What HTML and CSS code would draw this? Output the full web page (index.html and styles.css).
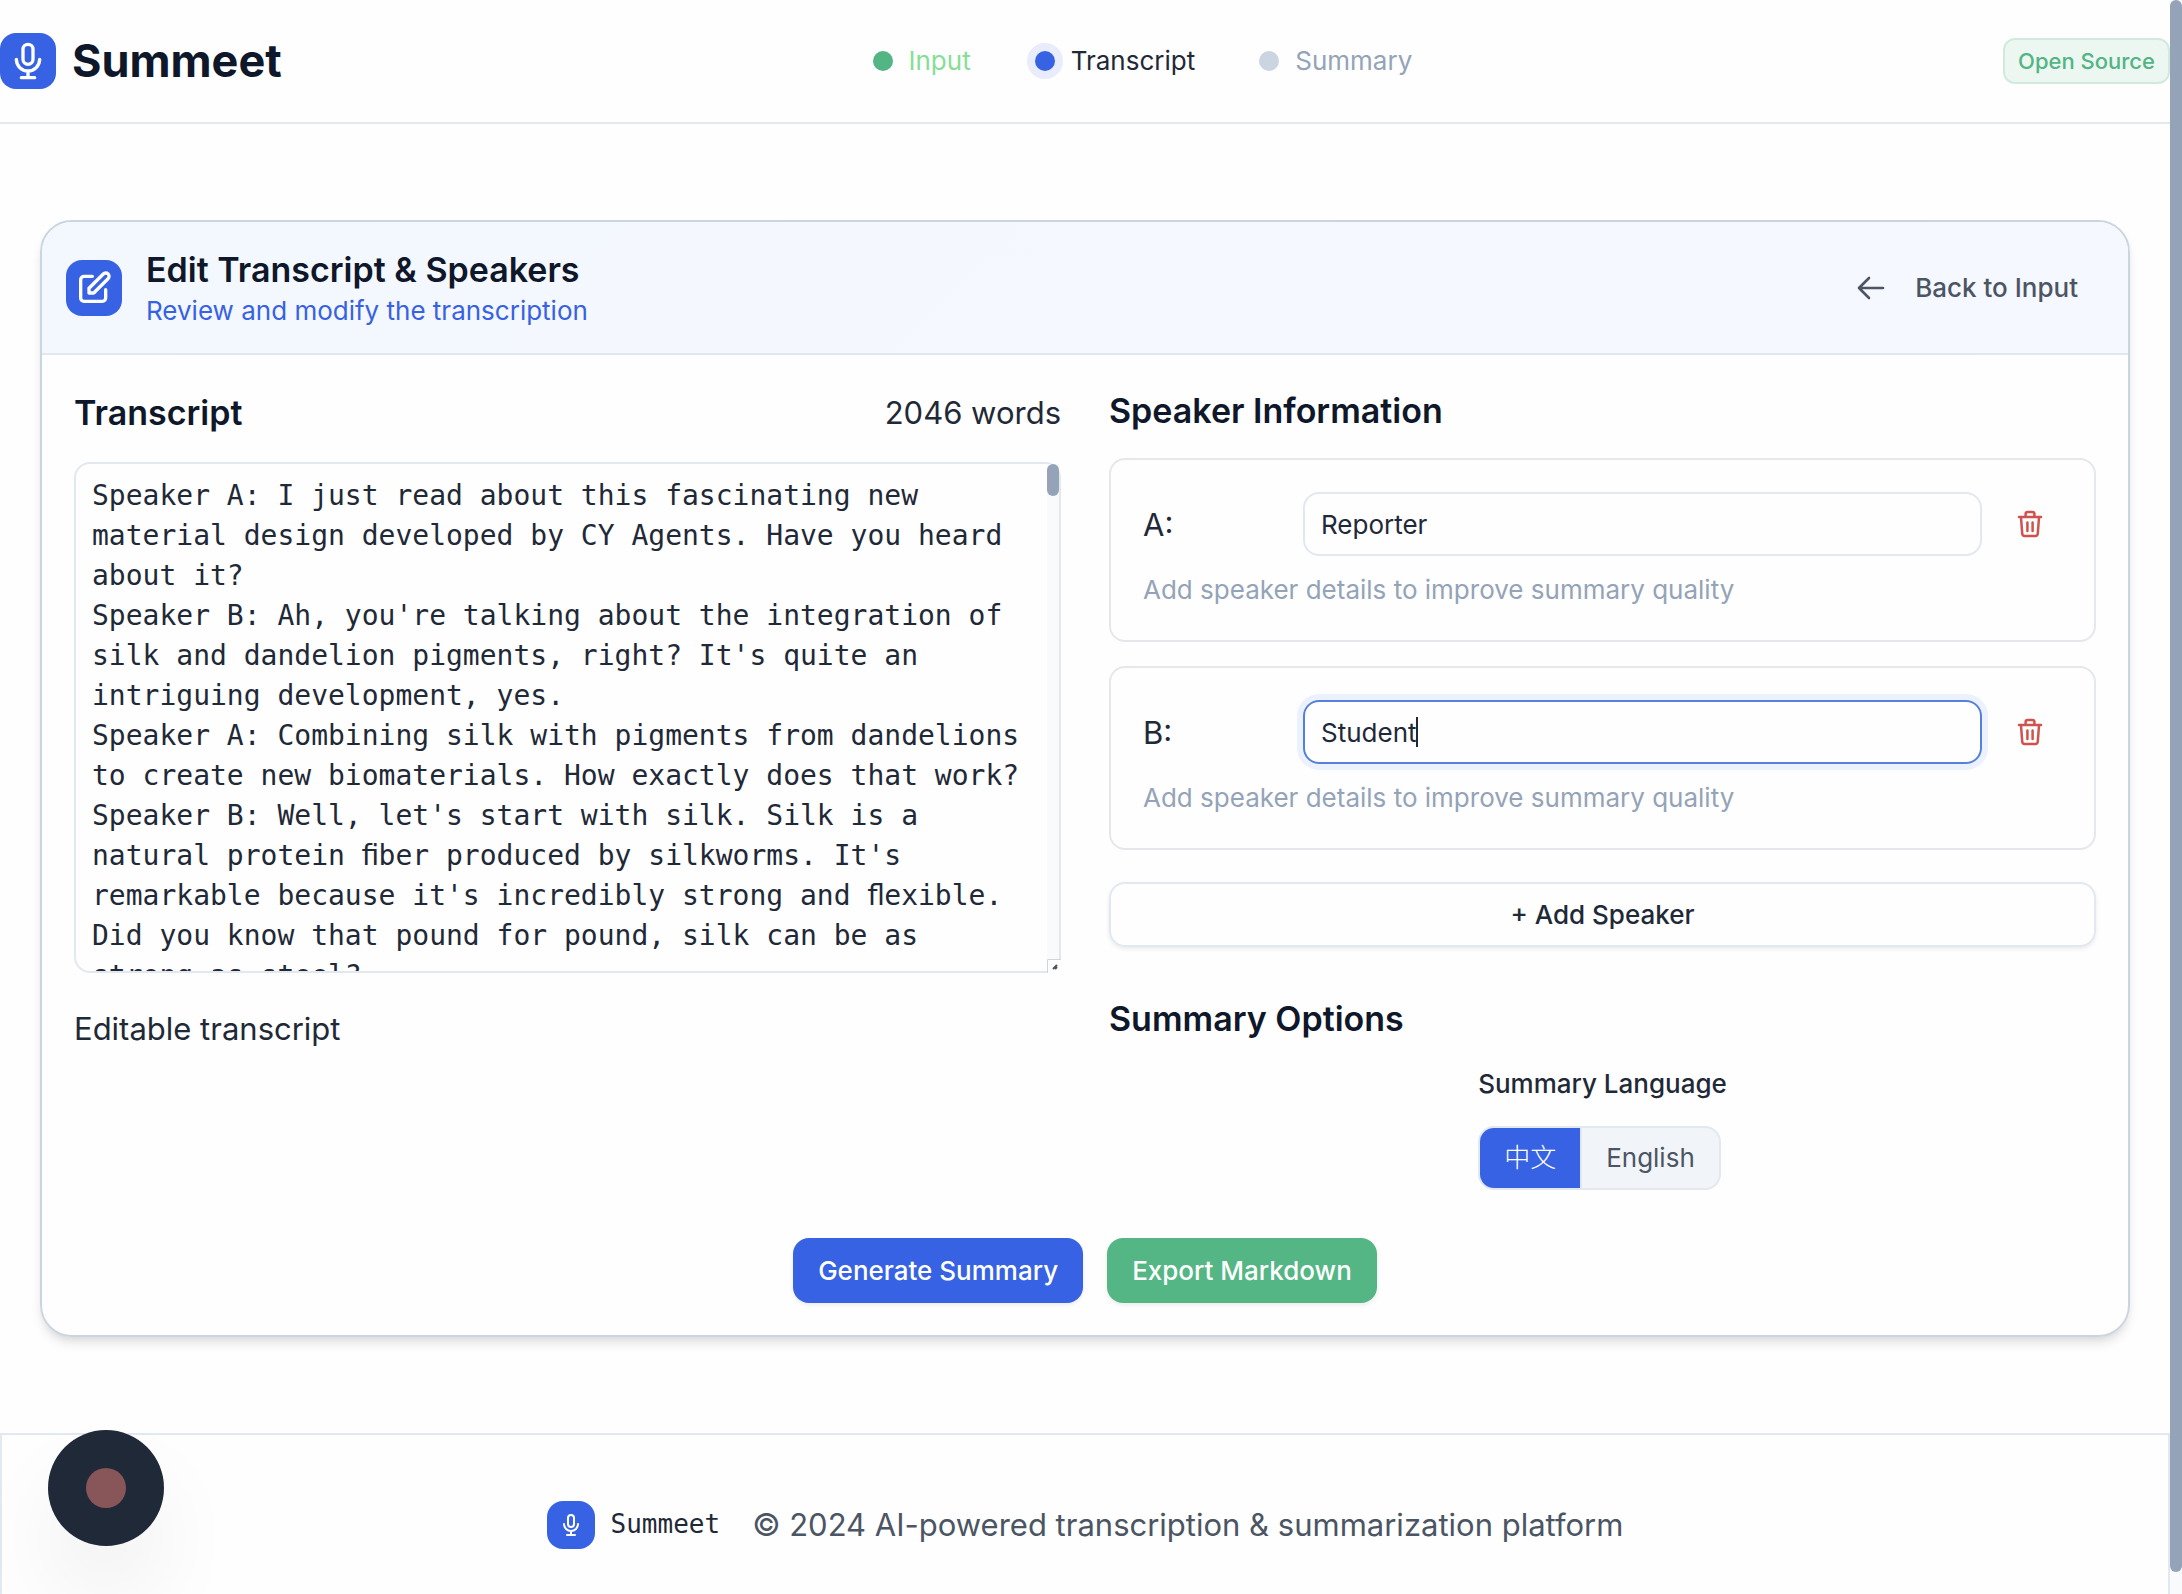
FILE: index.html
```html
<!DOCTYPE html>
<html lang="en">
<head>
<meta charset="utf-8">
<meta name="viewport" content="width=device-width, initial-scale=1">
<title>Summeet</title>
<link rel="stylesheet" href="styles.css">
</head>
<body>
<svg class="sprite" aria-hidden="true">
  <symbol id="mic" viewBox="0 0 24 24">
    <path d="M19 11a7 7 0 0 1-14 0M12 18v4M8 22h8M12 14a3 3 0 0 1-3-3V5a3 3 0 1 1 6 0v6a3 3 0 0 1-3 3z"/>
  </symbol>
  <symbol id="edit" viewBox="0 0 24 24">
    <path d="M11 5H6a2 2 0 0 0-2 2v11a2 2 0 0 0 2 2h11a2 2 0 0 0 2-2v-5m-1.414-9.414a2 2 0 1 1 2.828 2.828L11.828 15H9v-2.828l8.586-8.586z"/>
  </symbol>
  <symbol id="arrow" viewBox="0 0 24 24">
    <path d="M10.500 19.500 3 12l7.500-7.500M3 12h18"/>
  </symbol>
  <symbol id="trash" viewBox="0 0 28 28">
    <path d="M3 7h22M9.600 7V4a2 2 0 0 1 2-2h4.800a2 2 0 0 1 2 2v3M5 7.500l1.200 16a2.600 2.600 0 0 0 2.600 2.500h10.400a2.600 2.600 0 0 0 2.600-2.500l1.200-16M11.400 12.500v8.500M16.600 12.500v8.500"/>
  </symbol>
</svg>

<div class="viewport">
  <div class="page">
    <header class="topbar">
      <div class="brand">
        <span class="tile"><svg class="icon icon-lg"><use href="#mic"/></svg></span>
        <span class="brand-name">Summeet</span>
      </div>
      <ol class="steps">
        <li class="step step-done"><span class="dot"></span>Input</li>
        <li class="step step-current"><span class="dot"></span>Transcript</li>
        <li class="step step-next"><span class="dot"></span>Summary</li>
      </ol>
      <span class="badge">Open Source</span>
    </header>

    <main class="main">
      <section class="card">
        <div class="card-head">
          <span class="tile"><svg class="icon icon-lg"><use href="#edit"/></svg></span>
          <div class="card-titles">
            <h1 class="title">Edit Transcript &amp; Speakers</h1>
            <p class="subtitle">Review and modify the transcription</p>
          </div>
          <button class="back" type="button"><svg class="icon icon-md"><use href="#arrow"/></svg>Back to Input</button>
        </div>

        <div class="card-body">
          <div class="columns">
            <section class="column">
              <div class="transcript-head">
                <h2 class="title"><label for="transcript">Transcript</label></h2>
                <span>2046 words</span>
              </div>
              <div class="transcript-box">
                <textarea id="transcript" class="transcript" spellcheck="false">Speaker A: I just read about this fascinating new material design developed by CY Agents. Have you heard about it?
Speaker B: Ah, you're talking about the integration of silk and dandelion pigments, right? It's quite an intriguing development, yes.
Speaker A: Combining silk with pigments from dandelions to create new biomaterials. How exactly does that work?
Speaker B: Well, let's start with silk. Silk is a natural protein ﬁber produced by silkworms. It's remarkable because it's incredibly strong and ﬂexible. Did you know that pound for pound, silk can be as strong as steel?</textarea>
                <div class="scroll scroll-inner"><div class="thumb thumb-short"></div></div>
                <svg class="grip" viewBox="0 0 14 14"><path class="grip-box" d="M0 0h14v14H0z"/><path class="grip-edge" d="M.5 14V.5H14"/><path class="grip-mark" d="M6 10l4-4M8 10l2-2"/></svg>
              </div>
              <p class="note">Editable transcript</p>
            </section>

            <section class="column">
              <h2 class="title">Speaker Information</h2>
              <div class="speakers">
                <div class="speaker">
                  <div class="speaker-row">
                    <label class="speaker-label" for="speaker-a">A:</label>
                    <div class="field"><input class="input" id="speaker-a" type="text" value="Reporter"></div>
                    <button class="remove" type="button" aria-label="Remove speaker A"><svg class="icon icon-sm"><use href="#trash"/></svg></button>
                  </div>
                  <p class="hint">Add speaker details to improve summary quality</p>
                </div>
                <div class="speaker">
                  <div class="speaker-row">
                    <label class="speaker-label" for="speaker-b">B:</label>
                    <div class="field"><input class="input input-active" id="speaker-b" type="text" value="Student"><span class="caret"></span></div>
                    <button class="remove" type="button" aria-label="Remove speaker B"><svg class="icon icon-sm"><use href="#trash"/></svg></button>
                  </div>
                  <p class="hint">Add speaker details to improve summary quality</p>
                </div>
              </div>
              <button class="btn btn-outline" type="button">+ Add Speaker</button>

              <h2 class="title title-options">Summary Options</h2>
              <div class="language">
                <span class="language-label" id="language-label">Summary Language</span>
                <div class="segmented" role="group" aria-labelledby="language-label">
                  <button class="segment segment-on" type="button" aria-pressed="true" lang="zh">中文</button>
                  <button class="segment" type="button" aria-pressed="false">English</button>
                </div>
              </div>
            </section>
          </div>
          <div class="actions">
            <button class="btn btn-primary" type="button">Generate Summary</button>
            <button class="btn btn-success" type="button">Export Markdown</button>
          </div>
        </div>
      </section>
    </main>

    <footer class="footer">
      <span class="tile tile-sm"><svg class="icon icon-xs"><use href="#mic"/></svg></span>
      <span class="footer-name">Summeet</span>
      <span class="footer-text">© 2024 AI-powered transcription &amp; summarization platform</span>
    </footer>
  </div>
  <div class="scroll"><div class="thumb thumb-page"></div></div>
</div>

<button class="record" type="button" aria-label="Record"><span class="record-dot"></span></button>
</body>
</html>
```
FILE: styles.css
```css
* { box-sizing: border-box; }

body {
  margin: 0;
  background: #fefefe;
  color: #1f2937;
  font-family: Inter, "Noto Sans CJK SC", sans-serif;
  font-size: 31px;
  line-height: 51px;
}

h1, h2, p, ol { margin: 0; padding: 0; }
button, input, textarea { font: inherit; color: inherit; margin: 0; }
button { cursor: pointer; border: 0; background: none; padding: 0; }

.sprite { position: absolute; width: 0; height: 0; }

.icon { fill: none; stroke: currentColor; stroke-width: 2; stroke-linecap: round; stroke-linejoin: round; display: block; flex: none; }
.icon-lg { width: 40px; height: 40px; }
.icon-md { width: 32px; height: 32px; }
.icon-sm { width: 28px; height: 28px; stroke-width: 2.5; }
.icon-xs { width: 24px; height: 24px; }

/* window and scrollbars */
.viewport { display: grid; grid-template-columns: minmax(0, 1fr) 12px; height: 100vh; }
.page { overflow-y: auto; scrollbar-width: none; }
.scroll { background: #f8fafc; }
.thumb { background: #94a3b8; border-radius: 6px; }
.thumb-page { height: 98.6%; }
.thumb-short { height: 32px; }

/* top bar */
.topbar {
  display: flex;
  align-items: center;
  justify-content: space-between;
  padding: 33px 0;
  border-bottom: 2px solid #e2e8f0;
}
.brand { display: flex; align-items: center; gap: 16px; }
.brand-name { font-size: 45px; font-weight: 700; line-height: 56px; color: #0f172a; }
.tile {
  display: flex; align-items: center; justify-content: center; flex: none;
  width: 56px; height: 56px;
  border-radius: 16px;
  background: #3762e3;
  color: #fff;
}
.tile-sm { width: 48px; height: 48px; }

.steps { display: flex; gap: 64px; list-style: none; font-size: 26px; line-height: 40px; }
.step { display: flex; align-items: center; gap: 16px; }
.dot { width: 20px; height: 20px; border-radius: 50%; background: #cbd5e1; }
.step-done { color: #86de96; }
.step-done .dot { background: #53b484; }
.step-current .dot { background: #3762e3; box-shadow: 0 0 0 8px #e9edfb; }
.step-next { color: #94a3b8; }

.badge {
  border: 2px solid #d0ebdd; border-radius: 12px;
  background: #ecf7f1; color: #53b484;
  padding: 4px 13px;
  font-size: 22px; font-weight: 500; line-height: 34px;
}

/* card */
.main { padding: 96px 40px; }
.card {
  border: 2px solid #cbd5e1; border-radius: 32px;
  box-shadow: 0 8px 12px -2px rgba(0, 0, 0, .1), 0 4px 8px -4px rgba(0, 0, 0, .1);
  overflow: hidden;
}
.card-head {
  display: flex; align-items: center; gap: 24px;
  padding: 24px;
  border-bottom: 2px solid #e0e7f3;
  background: linear-gradient(135deg, #f3f7fe, #f6f8ff);
}
.card-titles { flex: 1; }
.title { font-size: 34px; font-weight: 600; line-height: 47px; color: #0f172a; }
.subtitle { font-size: 26px; line-height: 36px; color: #3762e3; }
.back {
  display: flex; align-items: center; gap: 28px;
  padding: 0 26px;
  font-size: 26px; font-weight: 500; line-height: 40px; color: #4b5563;
}
.card-body { padding: 32px; }
.columns { display: grid; grid-template-columns: minmax(0, 1fr) minmax(0, 1fr); gap: 48px; }
.column { display: flex; flex-direction: column; }

/* transcript */
.transcript-head { display: flex; align-items: center; justify-content: space-between; }
.transcript-box { position: relative; margin-top: 24px; display: flex; }
.transcript {
  flex: 1;
  height: 511px;
  padding: 12px 28px 12px 16px;
  border: 2px solid #e2e8f0; border-radius: 16px;
  background: transparent;
  font-family: "DejaVu Sans Mono", monospace;
  font-size: 28px; line-height: 40px;
  overflow: hidden; resize: none; outline: none;
}
.scroll-inner { position: absolute; top: 2px; right: 2px; bottom: 2px; width: 12px; }
.grip { position: absolute; right: 0; bottom: 0; width: 14px; height: 14px; fill: none; }
.grip-box { fill: #fefefe; }
.grip-edge { stroke: #d1d5db; }
.grip-mark { stroke: #4b5563; stroke-width: 2; }
.note { margin-top: 30px; }

/* speakers */
.speakers { display: grid; gap: 24px; margin-top: 24px; }
.speaker { border: 2px solid #e5e7eb; border-radius: 16px; padding: 32px; }
.speaker-row { display: flex; align-items: center; gap: 16px; }
.speaker-label { width: 144px; }
.field { position: relative; flex: 1; display: flex; }
.input {
  width: 100%; height: 64px;
  padding: 0 16px;
  border: 2px solid #e2e8f0; border-radius: 16px;
  background: transparent;
  font-size: 26px; outline: none;
}
.input-active { border-color: #5580dd; box-shadow: 0 0 0 6px #ebf1fd; }
.caret { position: absolute; left: 113px; top: 17px; width: 2px; height: 30px; background: #1f2937; }
.remove { display: flex; align-items: center; justify-content: center; width: 64px; height: 52px; color: #d0524c; }
.hint { margin-top: 16px; font-size: 26px; line-height: 36px; color: #94a3b8; }

.btn { height: 65px; padding: 0 25px; border-radius: 16px; font-size: 26px; font-weight: 500; line-height: 40px; box-shadow: 0 2px 4px rgba(0, 0, 0, .08); }
.btn-outline { margin-top: 32px; border: 2px solid #e2e8f0; }
.btn-primary { background: #3762e3; color: #fff; }
.btn-success { background: #55b685; color: #fff; }

/* summary options */
.title-options { margin-top: 48px; }
.language { align-self: center; margin-top: 22px; }
.language-label { display: block; font-size: 26px; font-weight: 500; line-height: 40px; }
.segmented {
  display: inline-flex; vertical-align: top;
  height: 64px; margin-top: 22px;
  border: 2px solid #e2e8f0; border-radius: 16px;
  background: #f1f5f9;
  overflow: hidden;
}
.segment { padding: 0 24px; font-size: 26px; line-height: 40px; color: #4b5563; }
.segment + .segment { border-left: 2px solid #e2e8f0; }
.segment-on { background: #3762e3; color: #fff; font-weight: 300; }

.actions { display: flex; justify-content: center; gap: 24px; margin-top: 48px; }

/* footer */
.footer {
  display: flex; align-items: center; justify-content: center; gap: 16px;
  padding: 64px 0;
  border: 2px solid #e2e8f0;
}
.footer-name { margin-right: 16px; font-family: "DejaVu Sans Mono", monospace; font-size: 26px; }
.footer-text { color: #4b5563; }

.record {
  position: fixed; left: 48px; bottom: 48px;
  display: flex; align-items: center; justify-content: center;
  width: 116px; height: 116px; border-radius: 50%;
  background: #1f2937;
  box-shadow: 0 50px 100px -24px rgba(0, 0, 0, .16);
}
.record-dot { width: 40px; height: 40px; border-radius: 50%; background: #885659; }
```
